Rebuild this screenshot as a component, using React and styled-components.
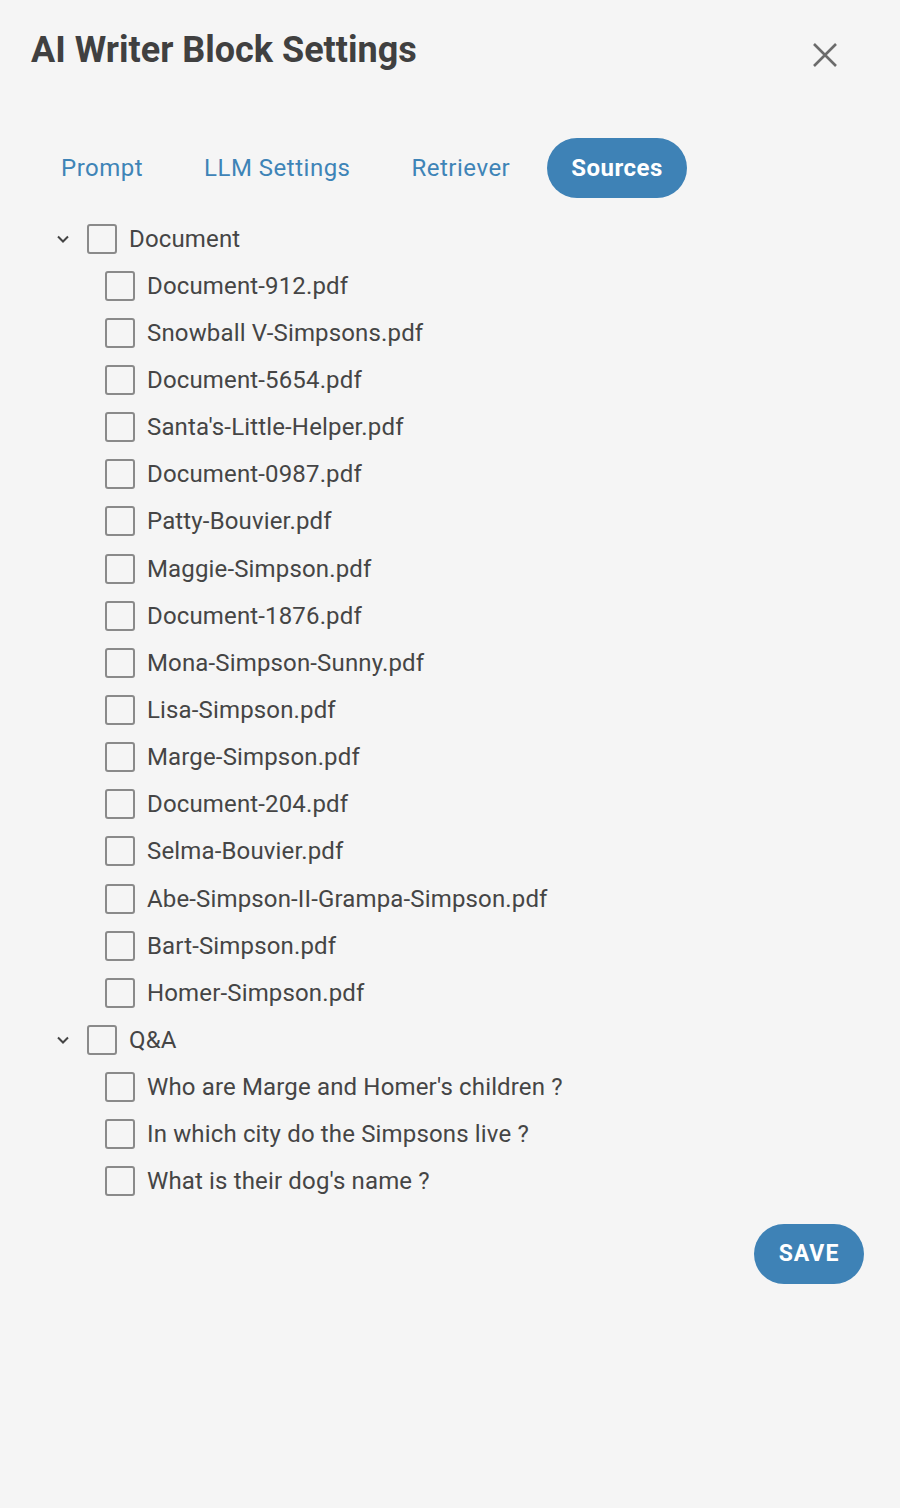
import React from "react";
import styled, { createGlobalStyle } from "styled-components";

const GlobalStyle = createGlobalStyle`
  html, body {
    margin: 0;
    padding: 0;
    background: #f5f5f5;
  }
  body {
    font-family: Roboto, "Noto Sans", sans-serif;
    color: #444;
  }
`;

const Panel = styled.div`
  width: 900px;
  min-height: 1508px;
  box-sizing: border-box;
  padding: 28px 36px 0 31px;
  display: flex;
  flex-direction: column;
`;

const Header = styled.div`
  display: flex;
  justify-content: space-between;
  align-items: flex-start;
`;

const Title = styled.h2`
  margin: 0;
  font-size: 36px;
  font-weight: 700;
  color: #404040;
  line-height: 44px;
`;

const CloseButton = styled.button`
  border: none;
  background: none;
  padding: 0;
  margin: 12px 24px 0 0;
  width: 30px;
  height: 30px;
  display: flex;
  align-items: center;
  justify-content: center;
  cursor: pointer;
`;

const Tabs = styled.div`
  display: flex;
  gap: 13px;
  margin: 66px 0 0 6px;
`;

const Tab = styled.button`
  border: none;
  height: 60px;
  padding: 0 24px;
  border-radius: 30px;
  font-family: Roboto, sans-serif;
  font-size: 24px;
  letter-spacing: 0.5px;
  font-weight: ${(p) => (p.active ? 700 : 400)};
  color: ${(p) => (p.active ? "#fff" : "#3e84b7")};
  background: ${(p) => (p.active ? "#3e82b6" : "transparent")};
  cursor: pointer;
`;

const Tree = styled.div`
  display: flex;
  flex-direction: column;
  margin-top: 17px;
  padding-left: 24px;
`;

const Row = styled.div`
  display: flex;
  align-items: center;
  height: 47.15px;
  padding-left: ${(p) => (p.child ? 50 : 0)}px;
`;

const Chevron = styled.span`
  width: 32px;
  display: flex;
  align-items: center;
  justify-content: flex-start;
`;

const Box = styled.span`
  width: 30px;
  height: 30px;
  border: 2px solid #8a8a8a;
  border-radius: 3px;
  box-sizing: border-box;
  flex-shrink: 0;
  margin-right: 12px;
`;

const Label = styled.span`
  font-size: 24px;
  color: #454545;
  letter-spacing: 0.15px;
`;

const Footer = styled.div`
  display: flex;
  justify-content: flex-end;
  margin-top: 19px;
`;

const SaveButton = styled.button`
  height: 60px;
  width: 110px;
  border: none;
  border-radius: 30px;
  background: #3e82b6;
  color: #fff;
  font-family: Roboto, sans-serif;
  font-weight: 700;
  font-size: 23px;
  letter-spacing: 1px;
  cursor: pointer;
`;

const groups = [
  {
    name: "Document",
    items: [
      "Document-912.pdf",
      "Snowball V-Simpsons.pdf",
      "Document-5654.pdf",
      "Santa's-Little-Helper.pdf",
      "Document-0987.pdf",
      "Patty-Bouvier.pdf",
      "Maggie-Simpson.pdf",
      "Document-1876.pdf",
      "Mona-Simpson-Sunny.pdf",
      "Lisa-Simpson.pdf",
      "Marge-Simpson.pdf",
      "Document-204.pdf",
      "Selma-Bouvier.pdf",
      "Abe-Simpson-II-Grampa-Simpson.pdf",
      "Bart-Simpson.pdf",
      "Homer-Simpson.pdf",
    ],
  },
  {
    name: "Q&A",
    items: [
      "Who are Marge and Homer's children ?",
      "In which city do the Simpsons live ?",
      "What is their dog's name ?",
    ],
  },
];

const tabs = ["Prompt", "LLM Settings", "Retriever", "Sources"];

export default function App() {
  return (
    <>
      <GlobalStyle />
      <Panel>
        <Header>
          <Title>AI Writer Block Settings</Title>
          <CloseButton aria-label="close">
            <svg width="26" height="26" viewBox="0 0 26 26">
              <path d="M2 2 L24 24 M24 2 L2 24" stroke="#6b6b6b" strokeWidth="2.6" />
            </svg>
          </CloseButton>
        </Header>
        <Tabs>
          {tabs.map((t) => (
            <Tab key={t} active={t === "Sources"}>
              {t}
            </Tab>
          ))}
        </Tabs>
        <Tree>
          {groups.map((g) => (
            <React.Fragment key={g.name}>
              <Row>
                <Chevron>
                  <svg width="16" height="16" viewBox="0 0 16 16">
                    <path d="M3 5.5 L8 10.5 L13 5.5" fill="none" stroke="#444" strokeWidth="2" />
                  </svg>
                </Chevron>
                <Box />
                <Label>{g.name}</Label>
              </Row>
              {g.items.map((it) => (
                <Row child key={it}>
                  <Box />
                  <Label>{it}</Label>
                </Row>
              ))}
            </React.Fragment>
          ))}
        </Tree>
        <Footer>
          <SaveButton>SAVE</SaveButton>
        </Footer>
      </Panel>
    </>
  );
}
